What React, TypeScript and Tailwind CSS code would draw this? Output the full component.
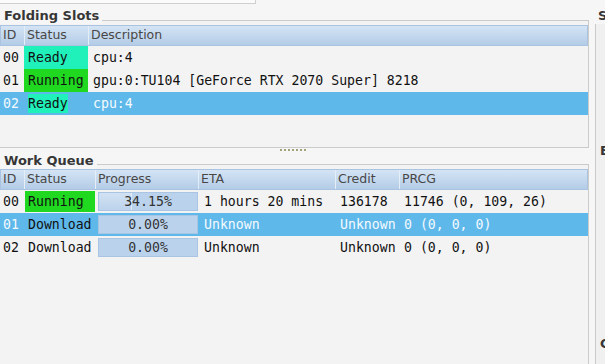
import React from 'react';

const sans = "font-['DejaVu_Sans',sans-serif]";
const mono = "font-['DejaVu_Sans_Mono',monospace]";

type Slot = { id: string; status: string; desc: string; selected?: boolean };
type Unit = {
  id: string;
  status: string;
  progress: number;
  eta: string;
  credit: string;
  prcg: string;
  selected?: boolean;
};

const slots: Slot[] = [
  { id: '00', status: 'Ready', desc: 'cpu:4' },
  { id: '01', status: 'Running', desc: 'gpu:0:TU104 [GeForce RTX 2070 Super] 8218' },
  { id: '02', status: 'Ready', desc: 'cpu:4', selected: true },
];

const units: Unit[] = [
  { id: '00', status: 'Running', progress: 34.15, eta: '1 hours 20 mins', credit: '136178', prcg: '11746 (0, 109, 26)' },
  { id: '01', status: 'Download', progress: 0, eta: 'Unknown', credit: 'Unknown', prcg: '0 (0, 0, 0)', selected: true },
  { id: '02', status: 'Download', progress: 0, eta: 'Unknown', credit: 'Unknown', prcg: '0 (0, 0, 0)' },
];

const statusBg: Record<string, string> = {
  Ready: 'bg-[#20f0b9]',
  Running: 'bg-[#20d820]',
  Download: '',
};

const HeaderCell = ({ label, w }: { label: string; w: string }) => (
  <div className={`${w} h-full flex items-center pl-[2px] border-r border-[#e4eef9] last:border-r-0`}>
    {label}
  </div>
);

const Header = ({ cols }: { cols: [string, string][] }) => (
  <div
    className={`flex h-[21px] shrink-0 bg-gradient-to-b from-[#d4e4f4] to-[#b4cce7] border border-[#a9c3e0] text-[12.5px] text-[#474747] ${sans}`}
  >
    {cols.map(([label, w]) => (
      <HeaderCell key={label} label={label} w={w} />
    ))}
  </div>
);

const Title = ({ text, mb }: { text: string; mb: string }) => (
  <div
    className={`relative z-10 w-fit bg-[#f6f6f6] pl-[4px] pr-[3px] text-[13px] leading-[16px] font-bold text-[#363636] ${sans} ${mb}`}
  >
    {text}
  </div>
);

const FoldingSlots = () => (
  <div className="h-[128px] border-t border-r border-b border-[#cbcbcb] bg-[#f3f3f3] pt-[4px]">
    <Header cols={[['ID', 'w-[24px]'], ['Status', 'w-[64px]'], ['Description', 'flex-1']]} />
    {slots.map((s) => (
      <div
        key={s.id}
        className={`flex h-[23px] text-[13.2px] ${mono} ${s.selected ? 'bg-[#5fb8ea] text-[#f4faff]' : 'text-[#111]'}`}
      >
        <div className="w-[24px] flex items-center pl-[3px]">{s.id}</div>
        {s.selected ? (
          <div className="w-[64px] flex items-center pl-[4px]">
            <span className={`${statusBg[s.status]} text-[#111]`}>{s.status}</span>
          </div>
        ) : (
          <div className={`w-[64px] flex items-center pl-[4px] ${statusBg[s.status]}`}>{s.status}</div>
        )}
        <div className="flex-1 flex items-center pl-[5px] whitespace-nowrap">{s.desc}</div>
      </div>
    ))}
  </div>
);

const ProgressBar = ({ value }: { value: number }) => (
  <div className="relative ml-[3px] h-[19px] w-[100px] border border-[#a9c5e3] bg-[#bad2eb]">
    {value > 0 && (
      <div
        className="h-full bg-gradient-to-b from-[#d2e2f3] to-[#bcd3ec] border-r border-[#e2ecf7]"
        style={{ width: `${value}%` }}
      />
    )}
    <div className="absolute inset-0 flex items-center justify-center text-[#333]">
      {value.toFixed(2)}%
    </div>
  </div>
);

const WorkQueue = () => (
  <div className="flex-1 border-t border-r border-[#cbcbcb] bg-[#f3f3f3] pt-[4px]">
    <Header
      cols={[
        ['ID', 'w-[24px]'],
        ['Status', 'w-[71px]'],
        ['Progress', 'w-[103px]'],
        ['ETA', 'w-[137px]'],
        ['Credit', 'w-[64px]'],
        ['PRCG', 'flex-1'],
      ]}
    />
    {units.map((u) => (
      <div
        key={u.id}
        className={`flex h-[23px] items-center text-[13.2px] ${mono} ${u.selected ? 'bg-[#5fb8ea] text-[#f4faff]' : 'text-[#111]'}`}
      >
        <div className="w-[24px] pl-[3px]">{u.id}</div>
        <div className="w-[71px] h-full py-[1px] pl-[1px]">
          <div className={`h-full flex items-center pl-[3px] text-[#111] ${statusBg[u.status]}`}>{u.status}</div>
        </div>
        <div className="w-[103px]">
          <ProgressBar value={u.progress} />
        </div>
        <div className="w-[137px] pl-[6px] whitespace-nowrap">{u.eta}</div>
        <div className="w-[64px] pl-[5px]">{u.credit}</div>
        <div className="flex-1 pl-[5px] whitespace-nowrap">{u.prcg}</div>
      </div>
    ))}
  </div>
);

const Splitter = () => (
  <div className="h-[5px] flex justify-center pt-[1px] pr-[3px]">
    <div className="flex gap-[2px] h-[2px]">
      {[0, 1, 2, 3, 4, 5, 6].map((i) => (
        <div key={i} className="w-[2px] h-[2px] bg-[#a3a37a]" />
      ))}
    </div>
  </div>
);

export default function App() {
  return (
    <div className="w-[605px] h-[364px] overflow-hidden bg-[#f6f6f6] flex">
      <div className="w-[589px] shrink-0 flex flex-col">
        <div className="h-[4px] w-[256px] border-b border-r border-[#cfcfcf] bg-[#fbfbfb]" />
        <div className="h-[4px]" />
        <Title text="Folding Slots" mb="mb-[-4px]" />
        <FoldingSlots />
        <Splitter />
        <Title text="Work Queue" mb="mb-[-5px]" />
        <WorkQueue />
      </div>
      <div className="flex-1 flex flex-col pl-[6px] overflow-hidden">
        <div className="h-[8px] shrink-0" />
        <div
          className={`relative z-10 w-fit bg-[#f6f6f6] pl-[3px] text-[13px] leading-[16px] font-bold text-[#363636] whitespace-nowrap mb-[-4px] ${sans}`}
        >
          Selected Work Unit
        </div>
        <div className={`flex-1 border-t border-l border-[#cbcbcb] bg-[#f0f0f0] pl-[4px] text-[13px] leading-[16px] font-bold text-[#363636] whitespace-nowrap ${sans}`}>
          <div className="mt-[122px]">Estimated Credit</div>
          <div className="mt-[177px]">Collection Server</div>
        </div>
      </div>
    </div>
  );
}
